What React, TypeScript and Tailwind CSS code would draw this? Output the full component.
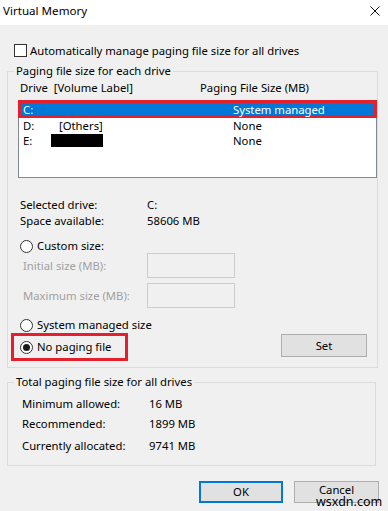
import React from "react";

const font = "font-['Noto_Sans','Liberation_Sans',sans-serif]";

function Radio({checked}: {checked?: boolean}) {
  return (
    <span className="flex h-[13px] w-[13px] shrink-0 items-center justify-center rounded-full border border-[#333] bg-white">
      {checked && <span className="h-[7px] w-[7px] rounded-full bg-[#1a1a1a]" />}
    </span>
  );
}

function TotalRow({label, value, className}: {label: string; value: string; className?: string}) {
  return (
    <div className={"flex h-[20px] items-center " + (className ?? "")}>
      <span className="ml-[14px] w-[127px]">{label}</span>
      <span>{value}</span>
    </div>
  );
}

export default function App() {
  return (
    <div className={`relative h-[511px] w-[388px] overflow-hidden bg-[#f0f0f0] text-[11.3px] leading-[16px] text-black ${font}`}>
      {/* title bar */}
      <div className="flex h-[25px] items-center justify-between bg-white pb-[3px] pl-[3px] pr-[8px]">
        <span className="text-[11.6px]">Virtual Memory</span>
        <svg width="10" height="10" viewBox="0 0 10 10">
          <path d="M0.5 0.5 L9.5 9.5 M9.5 0.5 L0.5 9.5" stroke="#111" strokeWidth="1" />
        </svg>
      </div>

      <label className="ml-[14px] mt-[19px] flex h-[13px] items-center gap-[3px]">
        <span className="h-[13px] w-[13px] border border-[#333] bg-white" />
        <span>Automatically manage paging file size for all drives</span>
      </label>

      {/* paging file per drive */}
      <fieldset className="ml-[7px] mt-[6px] h-[305px] w-[369px] border border-[#dcdcdc]">
        <legend className="ml-[6px] px-[2px] leading-[16px]">Paging file size for each drive</legend>

        <div className="mt-px flex h-[16px] items-center">
          <span className="ml-[12px] w-[180px]">Drive&nbsp;&nbsp;[Volume Label]</span>
          <span>Paging File Size (MB)</span>
        </div>

        <div className="ml-[10px] mt-[4px] h-[78px] w-[359px] border border-[#828790] bg-white leading-[15px]">
          <div className="-mx-px -mt-px flex h-[18px] items-center border-[3px] border-[#e3202b] bg-[#0078d7] pl-[2px] pt-px text-white">
            <span className="w-[210px]">C:</span>
            <span>System managed</span>
          </div>
          <div className="flex h-[15px] items-center pl-[4px]">
            <span className="w-[36px]">D:</span>
            <span className="w-[174px]">[Others]</span>
            <span>None</span>
          </div>
          <div className="flex h-[15px] items-center pl-[4px]">
            <span className="w-[28px]">E:</span>
            <span className="w-[182px]">
              <span className="block h-[13px] w-[52px] bg-black" />
            </span>
            <span>None</span>
          </div>
        </div>

        <div className="mt-[19px] flex h-[16px] items-center">
          <span className="ml-[12px] w-[127px]">Selected drive:</span>
          <span>C:</span>
        </div>
        <div className="flex h-[16px] items-center">
          <span className="ml-[12px] w-[127px]">Space available:</span>
          <span>58606 MB</span>
        </div>

        <div className="ml-[12px] mt-[10px] flex h-[14px] items-center gap-[4px]">
          <Radio />
          <span>Custom size:</span>
        </div>
        <div className="flex h-[25px] items-center text-[#a0a0a0]">
          <span className="ml-[15px] w-[124px]">Initial size (MB):</span>
          <span className="h-[25px] w-[88px] border border-[#cccccc] bg-[#f0f0f0]" />
        </div>
        <div className="mt-[5px] flex h-[25px] items-center text-[#a0a0a0]">
          <span className="ml-[15px] w-[124px]">Maximum size (MB):</span>
          <span className="h-[25px] w-[88px] border border-[#cccccc] bg-[#f0f0f0]" />
        </div>

        <div className="ml-[12px] mt-[9px] flex h-[16px] items-center gap-[4px]">
          <Radio />
          <span>System managed size</span>
        </div>
        <div className="flex items-start">
          <div className="ml-[3px] flex h-[28px] w-[117px] items-center gap-[4px] border-[3px] border-[#e3202b] pl-[6px]">
            <Radio checked />
            <span>No paging file</span>
          </div>
          <button className="ml-[153px] mt-px h-[23px] w-[86px] border border-[#adadad] bg-[#e1e1e1]">Set</button>
        </div>
      </fieldset>

      {/* totals */}
      <fieldset className="ml-[7px] mt-[6px] h-[92px] w-[369px] border border-[#dcdcdc]">
        <legend className="ml-[6px] px-[2px] leading-[16px]">Total paging file size for all drives</legend>
        <TotalRow className="mt-[4px]" label="Minimum allowed:" value="16 MB" />
        <TotalRow label="Recommended:" value="1899 MB" />
        <TotalRow className="mt-[2px]" label="Currently allocated:" value="9741 MB" />
      </fieldset>

      <div className="mt-[15px] flex justify-end gap-[11px] pr-[9px]">
        <button className="h-[22px] w-[84px] border-2 border-[#0078d7] bg-[#e1e1e1]">OK</button>
        <button className="h-[22px] w-[85px] border border-[#adadad] bg-[#e1e1e1] pb-[4px]">Cancel</button>
      </div>

      <span className="absolute left-[316px] top-[495px] text-[12.5px] leading-[14px] text-black">wsxdn.com</span>
    </div>
  );
}
